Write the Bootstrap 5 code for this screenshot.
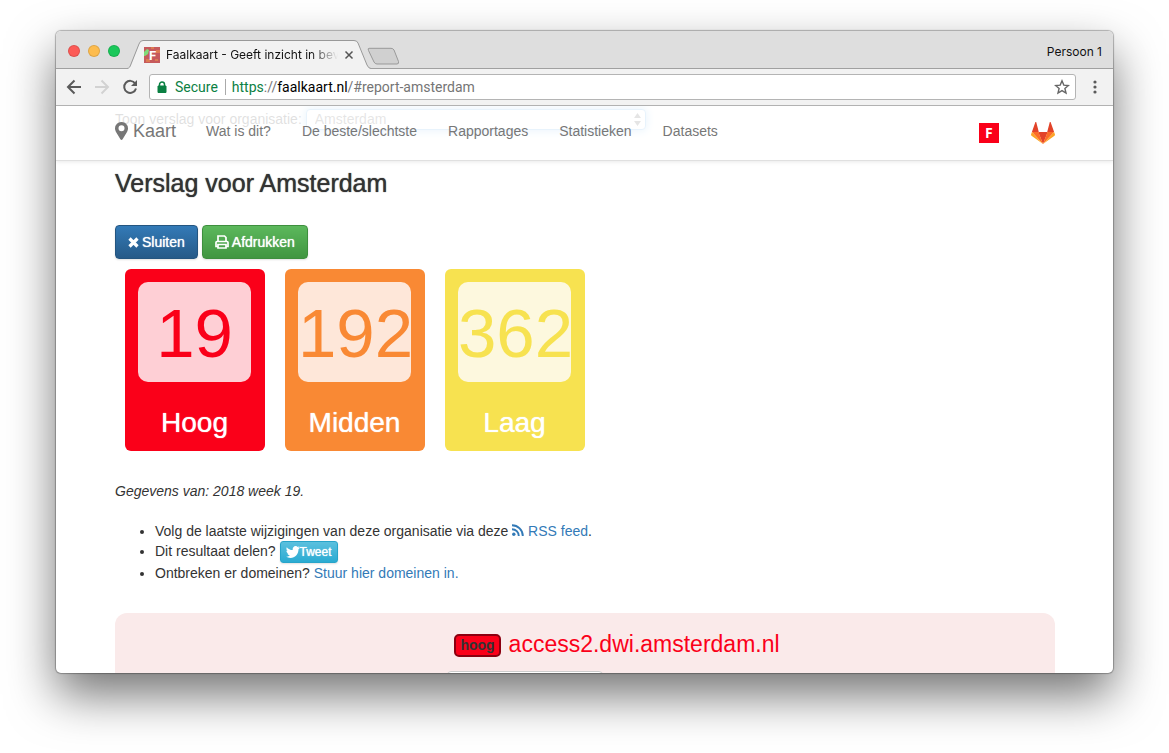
<!DOCTYPE html>
<html lang="nl">
<head>
<meta charset="utf-8">
<meta name="viewport" content="width=device-width, initial-scale=1">
<title>Faalkaart - Geeft inzicht in beveiliging</title>
<link href="https://cdn.jsdelivr.net/npm/bootstrap@5.3.0/dist/css/bootstrap.min.css" rel="stylesheet">
<script src="https://cdn.jsdelivr.net/npm/bootstrap@5.3.0/dist/js/bootstrap.bundle.min.js"></script>
<style>
  body { background: #fff; color: #333; font-family: "Liberation Sans", Arial, sans-serif; font-size: 14px; line-height: 20px; padding: 31px 56px 80px; height: 100vh; overflow: hidden; }
  a { color: #337ab7; text-decoration: none; }
  svg { display: block; flex: none; }
  .browser { height: 100%; border-radius: 5px; background: #fff; box-shadow: 0 0 1px 1px rgba(0,0,0,.28), 0 22px 48px rgba(0,0,0,.55); }
  .browser-body { border-radius: 5px; overflow: hidden; height: 100%; }
  .chrome-text { font-family: Inter, Roboto, sans-serif; font-size: 12px; color: #111; }
  .titlebar { height: 38px; flex: none; background: #dedede; box-shadow: inset 0 -1px #a0a0a0; padding: 0 11px 0 12px; }
  .lights { gap: 8px; padding-top: 14px; }
  .light { width: 12px; height: 12px; border-radius: 50%; border: 1px solid rgba(0,0,0,.12); }
  .tab-item { width: 242px; height: 29px; margin: 9px 0 0 7px; padding: 1px 15px 0 17px; gap: 6px; }
  .tab-shape { position: absolute; left: 0; top: 0; }
  .tab-title { white-space: nowrap; overflow: hidden; -webkit-mask-image: linear-gradient(90deg, #000 84%, transparent); mask-image: linear-gradient(90deg, #000 84%, transparent); }
  .tab-new { margin: 16px 0 0 -2px; }
  .toolbar { height: 37px; flex: none; background: #f2f2f2; border-bottom: 1px solid #b2b2b2; padding: 0 10px; gap: 12px; }
  .tool { border: 0; background: none; padding: 0; width: 16px; height: 16px; }
  .address { height: 26px; margin: 0 -1px; border: 1px solid #b4b4b4; border-radius: 3px; background: #fff; font-family: Roboto, sans-serif; font-size: 14px; color: #757575; padding: 0 5px 0 7px; }
  .green { color: #0b8043; }
  .address-rule { width: 1px; height: 16px; background: #aaa; margin: 0 6px 0 7px; }
  .site { overflow: hidden; min-height: 0; }
  .site-nav { position: absolute; left: 0; right: 0; top: 0; height: 55px; background: rgba(255,255,255,.85); border-bottom: 1px solid #e0e0e0; box-shadow: 0 1px 4px rgba(0,0,0,.09); padding: 0 58px 4px 59px; z-index: 2; }
  .site-nav a { color: #777; }
  .site-nav .home { font-size: 18px; gap: 5px; }
  .nav-items { gap: 31px; margin-left: 30px; }
  .nav-logos { gap: 32px; padding-top: 4px; }
  .page { padding: 2px 58px 0 59px; }
  .org { height: 22px; }
  .org select { width: 340px; height: 21px; padding: 0 8px; border: 1px solid #66afe9; border-radius: 4px; appearance: none; background: #fff; color: #555; outline: 0; box-shadow: 0 0 8px 1px rgba(102,175,233,.9); font-size: 14px; line-height: 18px; }
  .org svg { position: absolute; right: 5px; top: 4px; }
  .medium { text-shadow: 0 0 1px currentColor; }
  h1 { font-size: 25px; line-height: 26px; margin: 40px 0 29px; font-weight: 400; }
  .act { height: 34px; padding: 0 12px; border-radius: 4px; border: 1px solid; color: #fff; font-size: 14px; gap: 3px; box-shadow: 0 1px 2px rgba(0,0,0,.12); }
  .act-blue { background: linear-gradient(#337ab7, #265a88); border-color: #245580; }
  .act-green { background: linear-gradient(#5cb85c, #419641); border-color: #3e8f3e; }
  .act-tweet { height: 22px; padding: 0 5px; border-radius: 3px; font-size: 12px; gap: 0; background: linear-gradient(#5bc0de, #2aabd2); border-color: #28a4c9; }
  .scores { gap: 20px; margin: 10px 10px 30px; }
  .score { width: 140px; height: 182px; border-radius: 6px; padding: 13px 14px 0 13px; background: var(--tone); color: #fff; font-size: 28px; }
  .score-value { height: 100px; border-radius: 10px; background: var(--tint); color: var(--tone); font-size: 69px; line-height: 104px; margin-bottom: 25px; }
  .score-label { line-height: 32px; }
  .high { --tone: #fa0019; --tint: #fecfd5; }
  .mid { --tone: #f98934; --tint: #fee7d9; }
  .low { --tone: #f7e250; --tint: #fdf8de; }
  .links { margin: 20px 0 30px; padding-left: 40px; }
  .report { background: #faeaea; border-radius: 12px; height: 200px; padding-top: 17px; }
  .report-head { gap: 8px; padding-left: 64px; }
  .domain { color: #fa0019; font-size: 23px; line-height: 26px; }
  .tag { font-weight: 700; line-height: 19px; padding: 0 4px; border: 2px solid #8b0010; border-radius: 5px; background: #fa0019; margin-top: 4px; }
  .report-row { padding-right: 120px; margin-top: 14px; }
  .rating { width: 156px; height: 30px; border: 1px solid #ccc; border-radius: 4px; background: #fff; }
</style>
</head>
<body>
<div class="browser"><div class="browser-body d-flex flex-column">
  <header class="titlebar d-flex align-items-start">
    <div class="lights d-flex">
      <span class="light" style="background:#fc5b57"></span><span class="light" style="background:#fdbc4e"></span><span class="light" style="background:#1ac85a"></span>
    </div>
    <div class="tab-item position-relative d-flex align-items-center chrome-text">
      <svg class="tab-shape" width="244" height="29" viewBox="0 0 244 29"><path d="M0 29V28.500C3 28 4 26 5 23L12 4Q13 .5 16 .5H227Q230 .5 231 3L240 25Q241.500 28.500 244 28.500V29Z" fill="#f2f2f2"/><path d="M0 28.500C2 28.500 3 27 4 24L12 4Q13 .5 16 .5H227Q230 .5 231 3L240 25Q241.500 28.500 244 28.500" fill="none" stroke="#999"/></svg>
      <svg class="position-relative" width="16" height="16" viewBox="0 0 16 16"><path fill="#c65a5c" d="M0 0h16v16H0z"/><path fill="#dc7b52" d="M7 0h3v2H7zM12 3h4v3h-4zM2 12h4v3H2zM11 12h3v2h-3z"/><path fill="#7fdb7a" d="M0 5l3-3 2 1-1 4-3 2H0z"/><text x="5" y="13" font-family="Roboto" font-size="13" font-weight="700" fill="#fff">F</text></svg>
      <span class="tab-title position-relative flex-grow-1">Faalkaart - Geeft inzicht in beveiliging</span>
      <svg class="position-relative" width="10" height="10" viewBox="0 0 10 10"><path d="M1.500 1.500l7 7M8.500 1.500l-7 7" stroke="#555" stroke-width="1.500"/></svg>
    </div>
    <svg class="tab-new" width="36" height="18" viewBox="0 0 36 18"><path d="M3 .8H25Q27 .8 28 2.500L32.500 14Q33 16.500 31 16.500H11Q9 16.500 8 14.500L2.500 3Q1.500 .8 3 .8Z" transform="translate(-1 .5)" fill="#d0d0d0" stroke="#999"/></svg>
    <span class="chrome-text ms-auto align-self-center mt-1">Persoon 1</span>
  </header>
  <div class="toolbar d-flex align-items-center">
    <button class="tool" aria-label="Terug"><svg width="16" height="16" viewBox="0 0 16 16"><path d="M15 8H2M8.500 1.500L2 8l6.500 6.500" fill="none" stroke="#5a5a5a" stroke-width="2"/></svg></button>
    <button class="tool" aria-label="Vooruit"><svg width="16" height="16" viewBox="0 0 16 16"><path d="M1 8h13M7.500 1.500L14 8l-6.500 6.500" fill="none" stroke="#d2d2d2" stroke-width="2"/></svg></button>
    <button class="tool" aria-label="Vernieuwen"><svg width="16" height="16" viewBox="0 0 16 16"><path d="M13.200 4.500A6 6 0 1 0 14 9.500" fill="none" stroke="#5a5a5a" stroke-width="2"/><path d="M15 1v6H9z" fill="#5a5a5a"/></svg></button>
    <div class="address d-flex align-items-center flex-grow-1">
      <svg width="10" height="12" viewBox="0 0 10 12"><path d="M1 5h8v6.500H1z" fill="#0b8043" stroke="#0b8043"/><path d="M2.500 5V3.500a2.500 2.500 0 0 1 5 0V5" fill="none" stroke="#0b8043" stroke-width="1.500"/></svg>
      <span class="green ms-2">Secure</span><span class="address-rule"></span>
      <span class="flex-grow-1"><span class="green">https</span>://<span class="text-black">faalkaart.nl</span>/#report-amsterdam</span>
      <svg width="16" height="16" viewBox="0 0 16 16"><path d="M8 1.800l1.800 4.300 4.600.4-3.500 3 1.100 4.500L8 11.600 4 14l1.100-4.500-3.500-3 4.600-.4z" fill="none" stroke="#666" stroke-width="1.400"/></svg>
    </div>
    <button class="tool d-flex justify-content-center" aria-label="Menu"><svg width="4" height="16" viewBox="0 0 4 16" fill="#5a5a5a"><circle cx="2" cy="3" r="1.600"/><circle cx="2" cy="8" r="1.600"/><circle cx="2" cy="13" r="1.600"/></svg></button>
  </div>

  <div class="site position-relative flex-grow-1">
    <nav class="site-nav d-flex align-items-center">
      <a class="home d-flex align-items-center" href="#kaart"><svg width="13" height="18" viewBox="0 0 13 18"><path fill-rule="evenodd" d="M6.500 0A6.300 6.300 0 0 0 0 6.300C0 8 .6 9 1 10l4.400 7.200q1.100 1.500 2.200 0L12 10c.5-1 1-2 1-3.700A6.300 6.300 0 0 0 6.500 0zm0 3.300a3 3 0 1 1 0 6 3 3 0 0 1 0-6z" fill="#777"/></svg>Kaart</a>
      <div class="nav-items d-flex flex-grow-1">
        <a href="#wat">Wat is dit?</a><a href="#beste">De beste/slechtste</a><a href="#rapportages">Rapportages</a><a href="#statistieken">Statistieken</a><a href="#datasets">Datasets</a>
      </div>
      <div class="nav-logos d-flex align-items-center">
        <a href="#faalkaart" aria-label="Faalkaart"><svg width="20" height="20" viewBox="0 0 20 20"><path fill="#fa0019" d="M0 0h20v20H0z"/><text x="6" y="15" font-family="Open Sans" font-size="14" font-weight="700" fill="#fff">F</text></svg></a>
        <a href="#gitlab" aria-label="GitLab"><svg width="24" height="22" viewBox="0 0 24 22"><path fill="#e24329" d="M12 22L7.200 10h9.600zM4.400 0L.9 10h6.900L5.200 0zM19.600 0l3.500 10h-6.900L18.800 0z"/><path fill="#fc6d26" d="M12 22L.9 10h6.600zM12 22l4.500-12h6.600z"/><path fill="#fca326" d="M.9 10L0 12.500q0 .8.500 1.200L12 22zM23.100 10l.9 2.500q0 .8-.5 1.200L12 22z"/></svg></a>
      </div>
    </nav>
    <main class="page">
      <div class="org d-flex align-items-center">
        <label for="org">Toon verslag voor organisatie:</label>
        <div class="position-relative ms-1"><select id="org" class="d-block"><option>Amsterdam</option></select><svg width="7" height="13" viewBox="0 0 7 13"><path d="M0 5L3.500 0 7 5zM0 8l3.500 5L7 8z" fill="#555"/></svg></div>
      </div>
      <h1 class="medium">Verslag voor Amsterdam</h1>
      <div class="d-flex gap-1">
        <button class="act act-blue medium d-flex align-items-center"><svg width="11" height="11" viewBox="0 0 11 11"><path d="M1.500 1.500l8 8M9.500 1.500l-8 8" stroke="#fff" stroke-width="3.200"/></svg>Sluiten</button>
        <button class="act act-green medium d-flex align-items-center"><svg width="14" height="14" viewBox="0 0 14 14"><path d="M3 6.500V1h6.500L11 2.500v4M3 11.500H1V7.500Q1 6.500 2 6.500H12Q13 6.500 13 7.500V11.500H11M3 9.500h8V13H3z" fill="none" stroke="#fff" stroke-width="1.700"/></svg>Afdrukken</button>
      </div>
      <div class="scores d-flex">
        <div class="score high text-center"><div class="score-value">19</div><div class="score-label medium">Hoog</div></div>
        <div class="score mid text-center"><div class="score-value">192</div><div class="score-label medium">Midden</div></div>
        <div class="score low text-center"><div class="score-value">362</div><div class="score-label medium">Laag</div></div>
      </div>
      <p class="fst-italic m-0">Gegevens van: 2018 week 19.</p>
      <ul class="links">
        <li>Volg de laatste wijzigingen van deze organisatie via deze <a href="#rss"><svg class="d-inline-block align-baseline" width="12" height="12" viewBox="0 0 12 12"><circle cx="1.800" cy="10.200" r="1.700" fill="#337ab7"/><path d="M0 5.200A6.800 6.800 0 0 1 6.800 12M0 1.200A10.800 10.800 0 0 1 10.800 12" fill="none" stroke="#337ab7" stroke-width="1.900"/></svg> RSS feed</a>.</li>
        <li>Dit resultaat delen? <button class="act act-tweet medium d-inline-flex align-items-center align-top"><svg width="14" height="12" viewBox="0 0 14 12"><path fill="#fff" d="M14 1.700l-1.500 1.600C12.500 8.500 9 12 4.600 12 2.800 12 1.200 11.500 0 10.600c1.500.2 2.900-.2 4-1.100-1.200 0-2.200-.8-2.600-1.900h1.200C1.300 7.200.4 6.100.4 4.700l1.200.3C.4 4 .1 2.500.8 1.200 2.200 2.900 4.300 4 6.700 4.100 6.300 1.900 7.800 0 9.700 0c.8 0 1.500.3 2 .9L13.500.3l-1.100 1.600z"/></svg>Tweet</button></li>
        <li>Ontbreken er domeinen? <a href="#domeinen">Stuur hier domeinen in.</a></li>
      </ul>
      <section class="report">
        <div class="report-head d-flex justify-content-center align-items-center"><span class="tag">hoog</span><span class="domain">access2.dwi.amsterdam.nl</span></div>
        <div class="report-row d-flex justify-content-center"><div class="rating"></div></div>
      </section>
    </main>
  </div>
</div></div>
</body>
</html>
